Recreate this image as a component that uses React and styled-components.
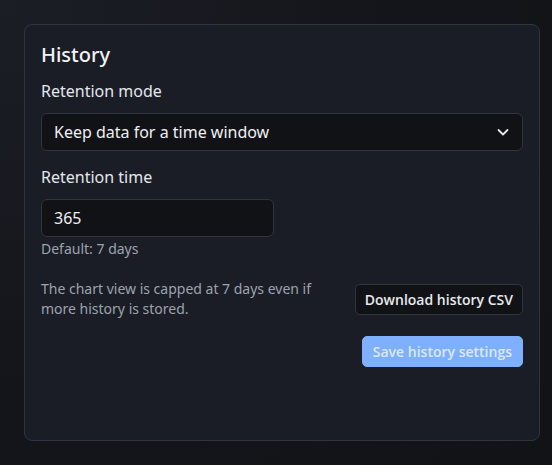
import React from 'react';
import styled, { createGlobalStyle } from 'styled-components';

const GlobalStyle = createGlobalStyle`
  html, body {
    margin: 0;
    padding: 0;
    height: 100%;
  }
  body {
    background: radial-gradient(circle at 0% 0%, #1b1e25 0%, #13151a 55%, #111317 100%);
    font-family: "Noto Sans", "Open Sans", sans-serif;
    color: #e8eaee;
  }
`;

const Page = styled.div`
  padding: 24px 12px 24px 24px;
  box-sizing: border-box;
  min-height: 465px;
`;

const Card = styled.section`
  box-sizing: border-box;
  width: 516px;
  height: 417px;
  padding: 16px;
  background: #1a1d25;
  border: 1px solid #2f3440;
  border-radius: 8px;
  display: flex;
  flex-direction: column;
`;

const Title = styled.h2`
  margin: 0 0 10px;
  font-size: 20px;
  font-weight: 500;
  line-height: 28px;
  color: #f1f3f6;
`;

const Field = styled.div`
  display: flex;
  flex-direction: column;
  margin-bottom: ${p => p.$gap || 0}px;
`;

const Label = styled.label`
  font-size: 16px;
  line-height: 24px;
  color: #e4e7ec;
  margin-bottom: 10px;
`;

const SelectBox = styled.div`
  box-sizing: border-box;
  height: 38px;
  display: flex;
  align-items: center;
  justify-content: space-between;
  padding: 0 12px;
  background: #111216;
  border: 1px solid #2f3440;
  border-radius: 6px;
  font-size: 16px;
  color: #eef0f3;
`;

const Input = styled.div`
  box-sizing: border-box;
  width: 233px;
  height: 38px;
  display: flex;
  align-items: center;
  padding: 0 12px;
  background: #111216;
  border: 1px solid #2f3440;
  border-radius: 6px;
  font-size: 16px;
  color: #eef0f3;
`;

const Hint = styled.div`
  margin-top: 2px;
  font-size: 14px;
  line-height: 20px;
  color: #9ca3af;
`;

const Row = styled.div`
  display: flex;
  align-items: center;
  justify-content: space-between;
  gap: 24px;
  margin-top: 20px;
`;

const Note = styled.p`
  margin: 0;
  max-width: 290px;
  font-size: 14px;
  line-height: 20px;
  color: #9ca3af;
`;

const Button = styled.button`
  box-sizing: border-box;
  height: 31px;
  padding: 0 ${p => (p.$primary ? 10 : 9)}px;
  border-radius: 5px;
  font-family: "Open Sans", "Noto Sans", sans-serif;
  font-size: 14px;
  font-weight: 600;
  white-space: nowrap;
  border: 1px solid ${p => (p.$primary ? '#7fb0ff' : '#2f3440')};
  background: ${p => (p.$primary ? '#7fb0ff' : '#111216')};
  color: ${p => (p.$primary ? '#dbe8fb' : '#e8eaee')};
`;

const Actions = styled.div`
  display: flex;
  justify-content: flex-end;
  margin-top: 17px;
`;

const Chevron = () => (
  <svg width="14" height="14" viewBox="0 0 14 14" fill="none">
    <path d="M2.5 5l4.5 4.5L11.5 5" stroke="#e4e7ec" strokeWidth="1.8" strokeLinecap="round" strokeLinejoin="round" />
  </svg>
);

export default function App() {
  return (
    <>
      <GlobalStyle />
      <Page>
        <Card>
          <Title>History</Title>
          <Field $gap={14}>
            <Label>Retention mode</Label>
            <SelectBox>
              <span>Keep data for a time window</span>
              <Chevron />
            </SelectBox>
          </Field>
          <Field>
            <Label>Retention time</Label>
            <Input>365</Input>
            <Hint>Default: 7 days</Hint>
          </Field>
          <Row>
            <Note>The chart view is capped at 7 days even if more history is stored.</Note>
            <Button>Download history CSV</Button>
          </Row>
          <Actions>
            <Button $primary disabled>Save history settings</Button>
          </Actions>
        </Card>
      </Page>
    </>
  );
}
